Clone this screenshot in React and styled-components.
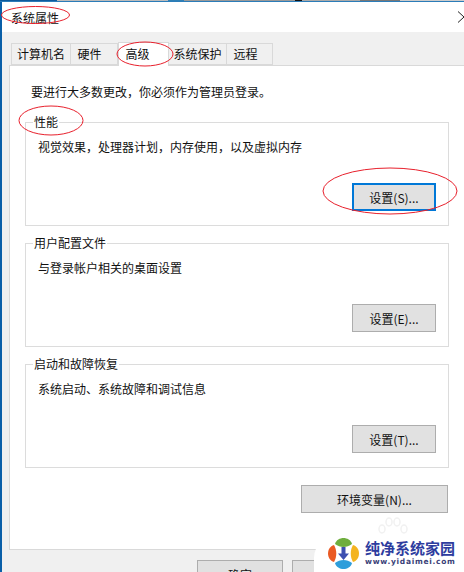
import React from 'react'
import styled, { createGlobalStyle } from 'styled-components'

const GlobalStyle = createGlobalStyle`
  html, body { margin: 0; padding: 0; background: #fff; }
  body { font-family: "Noto Sans CJK SC", "Liberation Sans", sans-serif; font-size: 12px; color: #111; }
  * { box-sizing: border-box; }
`

const Page = styled.div`
  position: relative;
  width: 464px;
  height: 572px;
  overflow: hidden;
  display: flex;
  flex-direction: column;
  background: #f0f0f0;
`

const TopEdge = styled.div`
  height: 2px;
  flex: none;
  border-bottom: 1px solid #2b7cb8;
  background: linear-gradient(90deg,
    #0d5a9c 0 57px, #bbb 57px 168px, #2f7fb5 168px 184px, #999 184px 295px,
    #111 295px 302px, #aaa 302px 360px, #777 360px 400px, #ccc 400px 464px);
`

const Body = styled.div`
  flex: 1;
  min-height: 0;
  display: flex;
  flex-direction: column;
  border-left: 2px solid #0a5fa8;
`

const TitleBar = styled.div`
  height: 30px;
  flex: none;
  background: #fff;
  display: flex;
  align-items: center;
  justify-content: space-between;
  padding: 0 0 0 9px;
  font-size: 12px;
`

const TabStrip = styled.div`
  display: flex;
  align-items: flex-end;
  height: 33px;
  flex: none;
  padding-left: 9px;
`

const Tab = styled.div`
  width: ${p => p.$w}px;
  height: ${p => (p.$active ? 24 : 22)}px;
  margin-bottom: ${p => (p.$active ? -1 : 0)}px;
  padding-bottom: ${p => (p.$active ? 3 : 1)}px;
  padding-right: ${p => p.$shift || 0}px;
  position: relative;
  z-index: ${p => (p.$active ? 2 : 0)};
  background: ${p => (p.$active ? '#fff' : '#f0f0f0')};
  border: 1px solid #d9d9d9;
  border-left-width: ${p => (p.$first || p.$active ? 1 : 0)}px;
  border-bottom-width: ${p => (p.$active ? 0 : 1)}px;
  display: flex;
  align-items: center;
  justify-content: center;
  font-size: 12px;
`

const Panel = styled.div`
  flex: none;
  height: 485px;
  margin-left: 7px;
  margin-right: -4px;
  background: #fff;
  border: 1px solid #d9d9d9;
  padding: 0 0 0 15px;
  display: flex;
  flex-direction: column;
`

const Notice = styled.div`
  height: 49px;
  padding: 17px 0 0 6px;
  line-height: 17px;
`

const Group = styled.fieldset`
  margin: 0 0 10px;
  padding: 0;
  width: 424px;
  height: 111px;
  flex: none;
  border: 1px solid #dcdcdc;
  min-inline-size: 0;
`

const Legend = styled.legend`
  margin-left: 7px;
  padding: 0 1px;
  font-size: 12px;
  line-height: 14px;
`

const GroupText = styled.div`
  height: 54px;
  padding: 9px 0 0 12px;
  line-height: 17px;
`

const GroupFoot = styled.div`
  padding: 0 12px 0 0;
  display: flex;
  justify-content: flex-end;
`

const Button = styled.div`
  width: ${p => p.$w || 84}px;
  height: 28px;
  flex: none;
  background: #e1e1e1;
  border: ${p => (p.$focused ? '2px solid #0078d7' : '1px solid #adadad')};
  display: flex;
  align-items: center;
  justify-content: center;
  font-size: 12px;
`

const EnvRow = styled.div`
  display: flex;
  justify-content: flex-end;
  padding: 7px 0 0;
  width: 423px;
`

const Footer = styled.div`
  display: flex;
  gap: 9px;
  padding: 10px 0 0 195px;
`

const Ellipses = styled.svg`
  position: absolute;
  left: 0;
  top: 0;
  width: 464px;
  height: 572px;
  pointer-events: none;
  z-index: 3;
`

const Watermark = styled.div`
  position: absolute;
  left: 314px;
  top: 534px;
  width: 150px;
  height: 38px;
  z-index: 4;
  display: flex;
  align-items: center;
  gap: 5px;
  padding-left: 13px;
  background: #fff;
  border-top-left-radius: 26px 24px;
`

const Paw = styled.svg`
  position: absolute;
  left: 62px;
  top: -17px;
`

const BrandColumn = styled.div`
  display: flex;
  flex-direction: column;
  gap: 2px;
`

const Brand = styled.div`
  color: #2d3c9e;
  font-size: 15px;
  font-weight: 700;
  line-height: 15px;
  white-space: nowrap;
`

const Site = styled.div`
  color: #3a3f78;
  font-family: "DejaVu Sans", sans-serif;
  font-size: 7.5px;
  font-weight: 700;
  letter-spacing: 0.7px;
  line-height: 9px;
  white-space: nowrap;
`

const CloseIcon = () => (
  <svg width="6" height="12" viewBox="0 0 6 12" fill="none" stroke="#222" strokeWidth="1">
    <path d="M0 0.500l6 5.500L0 11.500" />
  </svg>
)

const Logo = () => (
  <svg width="33" height="33" viewBox="0 0 33 33">
    <path d="M8 7C9 3 13 1 16.500 1S24 3 25 7c-5 4-12 4-17 0z" fill="#6fae3e" />
    <path d="M26 8c4 1 6 5 6 8.500S30 24 26 25c-3-5-3-12 0-17z" fill="#f4b41f" />
    <path d="M7 8C3 9 1 13 1 16.500S3 24 7 25c3-5 3-12 0-17z" fill="#ea5a24" />
    <path d="M8 26c1 4 5 6 8.500 6s7.500-2 8.500-6c-5-4-12-4-17 0z" fill="#2f9edb" />
    <path d="M14.500 10h4v6.500H22L16.500 23 11 16.500h3.500z" fill="#3d4fb0" />
  </svg>
)

const App = () => {
  return (
    <Page>
      <GlobalStyle />
      <TopEdge />
      <Body>
        <TitleBar>
          <span>系统属性</span>
          <CloseIcon />
        </TitleBar>
        <TabStrip>
          <Tab $w={60} $first>计算机名</Tab>
          <Tab $w={47} $shift={9}>硬件</Tab>
          <Tab $w={51} $shift={12} $active>高级</Tab>
          <Tab $w={58}>系统保护</Tab>
          <Tab $w={46} $shift={8}>远程</Tab>
        </TabStrip>
        <Panel>
          <Notice>要进行大多数更改，你必须作为管理员登录。</Notice>
          <Group>
            <Legend>性能</Legend>
            <GroupText>视觉效果，处理器计划，内存使用，以及虚拟内存</GroupText>
            <GroupFoot><Button $focused>设置(S)...</Button></GroupFoot>
          </Group>
          <Group>
            <Legend>用户配置文件</Legend>
            <GroupText>与登录帐户相关的桌面设置</GroupText>
            <GroupFoot><Button>设置(E)...</Button></GroupFoot>
          </Group>
          <Group>
            <Legend>启动和故障恢复</Legend>
            <GroupText>系统启动、系统故障和调试信息</GroupText>
            <GroupFoot><Button>设置(T)...</Button></GroupFoot>
          </Group>
          <EnvRow><Button $w={147}>环境变量(N)...</Button></EnvRow>
        </Panel>
        <Footer>
          <Button $w={86}>确定</Button>
          <Button $w={86}>取消</Button>
        </Footer>
      </Body>
      <Ellipses viewBox="0 0 464 572" fill="none" stroke="#e8202c" strokeWidth="1">
        <ellipse cx="35.500" cy="15" rx="34" ry="8.500" />
        <ellipse cx="145" cy="54" rx="28" ry="12" />
        <ellipse cx="51" cy="120.500" rx="32" ry="14.500" />
        <ellipse cx="390" cy="191" rx="67" ry="23" />
      </Ellipses>
      <Watermark>
        <Paw width="34" height="20" viewBox="0 0 34 20" fill="none" stroke="#f1f1f1" strokeWidth="1.500">
          <ellipse cx="6" cy="12" rx="3" ry="4" />
          <ellipse cx="13" cy="5" rx="3" ry="4" />
          <ellipse cx="21" cy="5" rx="3" ry="4" />
          <ellipse cx="28" cy="12" rx="3" ry="4" />
        </Paw>
        <Logo />
        <BrandColumn>
          <Brand>纯净系统家园</Brand>
          <Site>www.yidaimei.com</Site>
        </BrandColumn>
      </Watermark>
    </Page>
  )
}

export default App
